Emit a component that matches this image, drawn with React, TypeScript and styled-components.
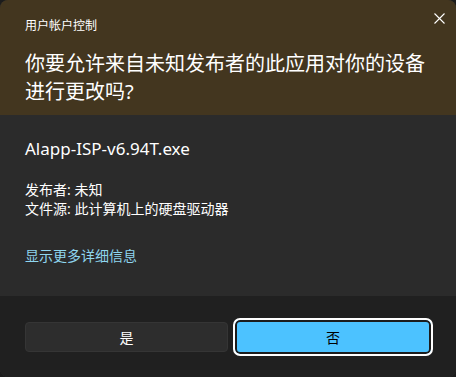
import React from "react";
import styled, { createGlobalStyle } from "styled-components";

const Global = createGlobalStyle`
  html, body { margin: 0; padding: 0; background: #1c1c1c; }
  body { font-family: "Noto Sans", "Noto Sans CJK SC", sans-serif; }
  * { box-sizing: border-box; }
`;

const Win = styled.div`
  width: 456px;
  height: 377px;
  border-radius: 8px;
  overflow: hidden;
  display: flex;
  flex-direction: column;
  background: #202020;
  box-shadow: inset 0 0 0 1px rgba(255,255,255,0.06);
`;

const Header = styled.div`
  position: relative;
  height: 115px;
  background: #43361f;
  padding: 18px 25px 0 25px;
  display: flex;
  flex-direction: column;
  gap: 16px;
`;

const Caption = styled.div`
  font-size: 12px;
  line-height: 16px;
  color: #ffffff;
`;

const Question = styled.div`
  font-size: 20px;
  line-height: 28px;
  color: #ffffff;
`;

const Close = styled.button`
  position: absolute;
  top: 8px;
  right: 6px;
  width: 22px;
  height: 20px;
  border: 0;
  background: transparent;
  padding: 0;
  display: flex;
  align-items: center;
  justify-content: center;
`;

const Body = styled.div`
  height: 181px;
  background: #2b2b2b;
  padding: 22px 25px 0 25px;
  display: flex;
  flex-direction: column;
`;

const FileName = styled.div`
  font-size: 17px;
  line-height: 23px;
  color: #ffffff;
`;

const Meta = styled.div`
  margin-top: 20px;
  font-size: 14px;
  line-height: 19px;
  color: #ffffff;
`;

const Link = styled.div`
  margin-top: 28px;
  font-size: 14px;
  line-height: 19px;
  color: #8fd6ef;
`;

const Footer = styled.div`
  flex: 1;
  background: #202020;
  display: grid;
  grid-template-columns: 203px 200px;
  column-gap: 5px;
  align-items: center;
  padding: 0 23px 0 25px;
`;

const Btn = styled.button<{ $primary?: boolean }>`
  font-family: "Noto Sans CJK SC", "Noto Sans", sans-serif;
  font-size: 14px;
  height: ${(p) => (p.$primary ? "38px" : "30px")};
  border-radius: ${(p) => (p.$primary ? "7px" : "4px")};
  color: ${(p) => (p.$primary ? "#000000" : "#ffffff")};
  background: ${(p) => (p.$primary ? "#4cc2ff" : "#2d2d2d")};
  border: ${(p) => (p.$primary ? "2px solid #ffffff" : "1px solid #353535")};
  box-shadow: ${(p) => (p.$primary ? "inset 0 0 0 2px #1c1c1c" : "none")};
  padding: 0;
  display: flex;
  align-items: center;
  justify-content: center;
`;

export default function App() {
  return (
    <>
      <Global />
      <Win>
        <Header>
          <Caption>用户帐户控制</Caption>
          <Question>
            你要允许来自未知发布者的此应用对你的设备
            <br />
            进行更改吗?
          </Question>
          <Close aria-label="关闭">
            <svg width="11" height="11" viewBox="0 0 11 11">
              <path d="M0.5 0.5 L10.5 10.5 M10.5 0.5 L0.5 10.5" stroke="#ffffff" strokeWidth="1.1" fill="none" />
            </svg>
          </Close>
        </Header>
        <Body>
          <FileName>Alapp-ISP-v6.94T.exe</FileName>
          <Meta>
            发布者: 未知
            <br />
            文件源: 此计算机上的硬盘驱动器
          </Meta>
          <Link>显示更多详细信息</Link>
        </Body>
        <Footer>
          <Btn>是</Btn>
          <Btn $primary>否</Btn>
        </Footer>
      </Win>
    </>
  );
}
